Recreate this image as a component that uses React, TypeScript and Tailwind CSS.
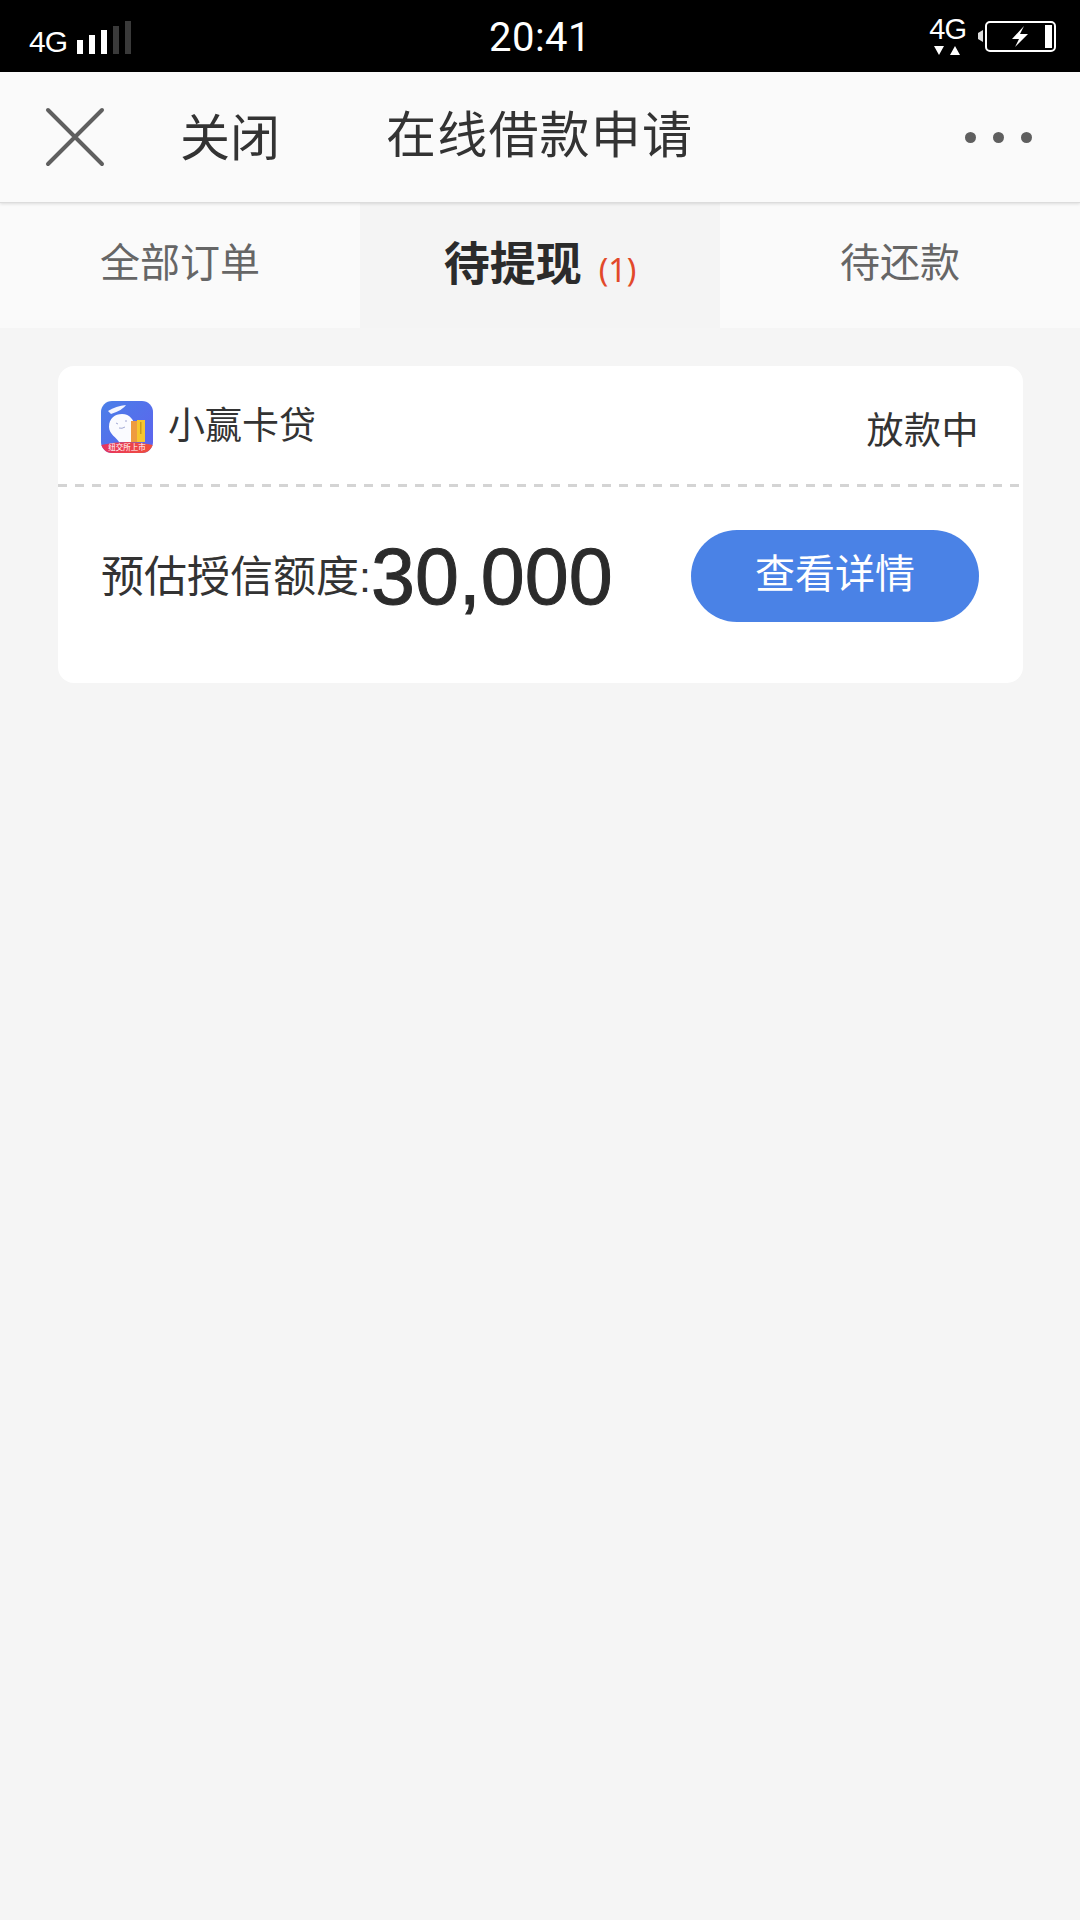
import React from 'react';

const cjk = 'font-["Liberation_Sans","Noto_Sans_CJK_SC",sans-serif]';

const SignalBars = () => (
  <svg width="54" height="33" viewBox="0 0 54 33" className="block">
    <rect x="0" y="19" width="6" height="14" fill="#fff" />
    <rect x="12" y="14" width="6" height="19" fill="#fff" />
    <rect x="24" y="9" width="6" height="24" fill="#fff" />
    <rect x="36" y="5" width="6" height="28" fill="#3a3a3a" />
    <rect x="48" y="0" width="6" height="33" fill="#3a3a3a" />
  </svg>
);

const Battery = () => (
  <svg width="80" height="31" viewBox="0 0 80 31" className="block">
    <path d="M6 9 L1 12 V18 L6 21 Z" fill="#ddd" />
    <rect x="9" y="1" width="69" height="29" rx="4" fill="none" stroke="#fff" strokeWidth="2" />
    <rect x="68" y="4" width="7" height="23" fill="#fff" />
    <path d="M47 5 L35 18 H42 L38 26 L51 13 H43 Z" fill="#fff" />
  </svg>
);

const AppLogo = () => (
  <svg width="52" height="52" viewBox="0 0 52 52" className="block shrink-0">
    <defs>
      <linearGradient id="logoBg" x1="0" y1="0" x2="1" y2="1">
        <stop offset="0" stopColor="#4a7fe8" />
        <stop offset="1" stopColor="#5f62ee" />
      </linearGradient>
      <linearGradient id="logoBand" x1="0" y1="0" x2="1" y2="0">
        <stop offset="0" stopColor="#e8335f" />
        <stop offset="1" stopColor="#f0503c" />
      </linearGradient>
      <clipPath id="logoClip">
        <rect width="52" height="52" rx="11" />
      </clipPath>
    </defs>
    <g clipPath="url(#logoClip)">
      <rect width="52" height="52" fill="url(#logoBg)" />
      <path d="M7 10 Q15 5 25 4 Q22 9 10 13 Z" fill="#f4f6ff" />
      <path d="M8 26 C8 17 14 13 21 13 C29 13 33 19 34 26 L33 41 L18 41 C16 37 8 33 8 26 Z" fill="#fafbff" />
      <rect x="30" y="20" width="7" height="21" fill="#ee9b3f" />
      <rect x="36" y="19" width="8" height="22" fill="#f6c62e" />
      <rect x="39" y="21" width="1.5" height="12" fill="#c99a1c" />
      <path d="M15 22 L17 23 M24 20 L26 20 M18 27 Q21 28 24 26" stroke="#8a93c8" strokeWidth="0.8" fill="none" />
      <path d="M0 44 Q26 38 52 44 V52 H0 Z" fill="url(#logoBand)" />
      <text x="26" y="48.5" textAnchor="middle" fontSize="7.5" fill="#fff" fontFamily="Noto Sans CJK SC, sans-serif">纽交所上市</text>
    </g>
  </svg>
);

export default function App() {
  return (
    <div className={`w-[1080px] h-[1920px] bg-[#f5f5f5] ${cjk} overflow-hidden`}>
      <div className="h-[72px] bg-black flex items-center justify-between text-white">
        <div className="h-full flex items-end pl-[29px] gap-[10px] w-[300px] pb-[18px]">
          <span className="text-[30px] leading-none tracking-[-1px] mb-[-3px]">4G</span>
          <SignalBars />
        </div>
        <span className="text-[40px] leading-none font-['Roboto',sans-serif] tracking-[0.5px] mt-[4px]">20:41</span>
        <div className="flex items-center justify-end w-[300px] pr-[23px] gap-[11px]">
          <div className="flex flex-col items-center mt-[-2px]">
            <span className="text-[29px] leading-none tracking-[-1px]">4G</span>
            <svg width="27" height="10" viewBox="0 0 27 10" className="block mt-[2px]">
              <path d="M0 0 H10 L5 9 Z M16 9 H26 L21 0 Z" fill="#fff" />
            </svg>
          </div>
          <Battery />
        </div>
      </div>

      <div className="h-[131px] bg-[#fafafa] flex items-center border-b border-[#dcdcdc] shadow-[0_1px_3px_rgba(0,0,0,0.12)] relative">
        <svg width="60" height="60" viewBox="0 0 60 60" className="block ml-[45px] shrink-0">
          <path d="M3 3 L57 57 M57 3 L3 57" stroke="#5f5f5f" strokeWidth="4" strokeLinecap="round" />
        </svg>
        <span className="ml-[75px] text-[50px] leading-none text-[#333] w-[207px] mt-[4px]">关闭</span>
        <span className="text-[50px] leading-none text-[#333] tracking-[1.2px] mt-[-2px] ml-[-1px]">在线借款申请</span>
        <div className="ml-auto mr-[48px] flex gap-[17px]">
          <span className="w-[11px] h-[11px] rounded-full bg-[#5f5f5f]" />
          <span className="w-[11px] h-[11px] rounded-full bg-[#5f5f5f]" />
          <span className="w-[11px] h-[11px] rounded-full bg-[#5f5f5f]" />
        </div>
      </div>

      <div className="h-[125px] bg-[#fafafa] grid grid-cols-3">
        <div className="flex items-center justify-center text-[40px] text-[#666] pb-[6px]">全部订单</div>
        <div className="flex items-center justify-center bg-[#f4f4f4]">
          <span className="text-[46px] leading-none font-bold text-[#2b2b2b] mt-[-4px]">待提现</span>
          <span className="text-[32px] leading-none text-[#e2492a] ml-[17px] mt-[8px] font-['Noto_Sans',sans-serif]">(1)</span>
        </div>
        <div className="flex items-center justify-center text-[40px] text-[#666] pb-[6px]">待还款</div>
      </div>

      <div className="mt-[38px] ml-[58px] w-[965px] h-[317px] bg-white rounded-[16px] flex flex-col">
        <div className="h-[118px] flex justify-between pl-[43px] pr-[44px] shrink-0">
          <div className="flex items-center gap-[15px] pt-[3px]">
            <AppLogo />
            <span className="text-[37px] leading-none text-[#333] mt-[-1px]">小赢卡贷</span>
          </div>
          <span className="text-[37px] leading-none text-[#333] mt-[47px] tracking-[0.5px]">放款中</span>
        </div>
        <div className="h-[3px] shrink-0 bg-[repeating-linear-gradient(90deg,#d4d4d4_0,#d4d4d4_9px,transparent_9px,transparent_17px)]" />
        <div className="flex-1 flex items-start justify-between pl-[43px] pr-[44px] pt-[43px]">
          <div className="flex items-center h-[92px]">
            <span className="text-[43px] leading-none text-[#333] mt-[2px]">预估授信额度:</span>
            <span className="text-[79px] leading-none text-[#2b2b2b] [-webkit-text-stroke:1px_#2b2b2b]">30,000</span>
          </div>
          <div className="w-[288px] h-[92px] rounded-full bg-[#4a82e6] text-white text-[40px] flex items-center justify-center pb-[4px]">查看详情</div>
        </div>
      </div>
    </div>
  );
}
